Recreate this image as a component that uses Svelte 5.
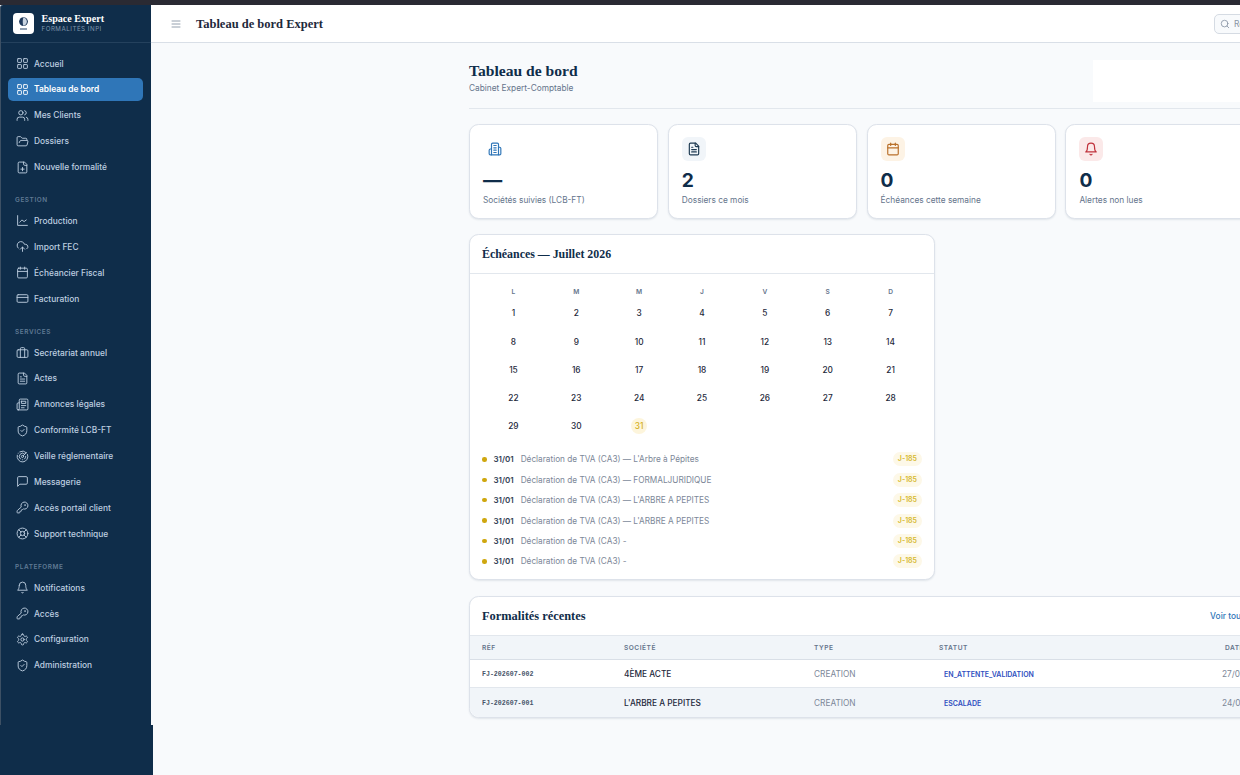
<script>
  const I = {
    grid: '<rect x="3" y="3" width="7" height="7" rx="1"/><rect x="14" y="3" width="7" height="7" rx="1"/><rect x="14" y="14" width="7" height="7" rx="1"/><rect x="3" y="14" width="7" height="7" rx="1"/>',
    users: '<path d="M16 21v-2a4 4 0 0 0-4-4H6a4 4 0 0 0-4 4v2"/><circle cx="9" cy="7" r="4"/><path d="M22 21v-2a4 4 0 0 0-3-3.87"/><path d="M16 3.13a4 4 0 0 1 0 7.75"/>',
    folder: '<path d="m6 14 1.5-2.9A2 2 0 0 1 9.24 10H20a2 2 0 0 1 1.94 2.5l-1.54 6a2 2 0 0 1-1.95 1.5H4a2 2 0 0 1-2-2V5a2 2 0 0 1 2-2h3.9a2 2 0 0 1 1.69.9l.81 1.2a2 2 0 0 0 1.67.9H18a2 2 0 0 1 2 2v2"/>',
    fileplus: '<path d="M15 2H6a2 2 0 0 0-2 2v16a2 2 0 0 0 2 2h12a2 2 0 0 0 2-2V7Z"/><path d="M14 2v4a2 2 0 0 0 2 2h4"/><path d="M9 15h6"/><path d="M12 18v-6"/>',
    chart: '<path d="M3 3v18h18"/><path d="m19 11-4 3-4-3-4 4"/>',
    upload: '<path d="M12 13v8"/><path d="M4 14.899A7 7 0 1 1 15.71 8h1.79a4.5 4.5 0 0 1 2.5 8.242"/><path d="m8 17 4-4 4 4"/>',
    calendar: '<path d="M8 2v4"/><path d="M16 2v4"/><rect x="3" y="4" width="18" height="18" rx="2"/><path d="M3 10h18"/>',
    card: '<rect x="2" y="5" width="20" height="14" rx="2"/><path d="M2 10h20"/>',
    briefcase: '<rect x="2" y="7" width="20" height="14" rx="2"/><path d="M16 21V5a2 2 0 0 0-2-2h-4a2 2 0 0 0-2 2v16"/>',
    file: '<path d="M15 2H6a2 2 0 0 0-2 2v16a2 2 0 0 0 2 2h12a2 2 0 0 0 2-2V7Z"/><path d="M14 2v4a2 2 0 0 0 2 2h4"/><path d="M10 9H8"/><path d="M16 13H8"/><path d="M16 17H8"/>',
    news: '<path d="M4 22h16a2 2 0 0 0 2-2V4a2 2 0 0 0-2-2H8a2 2 0 0 0-2 2v16a2 2 0 0 1-2 2Zm0 0a2 2 0 0 1-2-2v-9c0-1.1.9-2 2-2h2"/><path d="M18 14h-8"/><path d="M15 18h-5"/><path d="M10 6h8v4h-8V6Z"/>',
    shield: '<path d="M20 13c0 5-3.5 7.5-7.66 8.95a1 1 0 0 1-.67-.01C7.5 20.5 4 18 4 13V6a1 1 0 0 1 1-1c2 0 4.5-1.2 6.24-2.72a1.17 1.17 0 0 1 1.52 0C14.51 3.81 17 5 19 5a1 1 0 0 1 1 1z"/><path d="m9 12 2 2 4-4"/>',
    radar: '<path d="M19.07 4.93A10 10 0 0 0 6.99 3.34"/><path d="M4 6h.01"/><path d="M2.29 9.62A10 10 0 1 0 21.31 8.35"/><path d="M16.24 7.76A6 6 0 1 0 8.23 16.67"/><path d="M12 18h.01"/><path d="M17.99 11.66A6 6 0 0 1 15.77 16.67"/><circle cx="12" cy="12" r="2"/><path d="m13.41 10.59 5.66-5.66"/>',
    message: '<path d="M21 15a2 2 0 0 1-2 2H7l-4 4V5a2 2 0 0 1 2-2h14a2 2 0 0 1 2 2z"/>',
    key: '<path d="M2.586 17.414A2 2 0 0 0 2 18.828V21a1 1 0 0 0 1 1h3a1 1 0 0 0 1-1v-1a1 1 0 0 1 1-1h1a1 1 0 0 0 1-1v-1a1 1 0 0 1 1-1h.172a2 2 0 0 0 1.414-.586l.814-.814a6.5 6.5 0 1 0-4-4z"/><circle cx="16.5" cy="7.5" r=".5"/>',
    buoy: '<circle cx="12" cy="12" r="10"/><path d="m4.93 4.93 4.24 4.24"/><path d="m14.83 9.17 4.24-4.24"/><path d="m14.83 14.83 4.24 4.24"/><path d="m9.17 14.83-4.24 4.24"/><circle cx="12" cy="12" r="4"/>',
    bell: '<path d="M6 8a6 6 0 0 1 12 0c0 7 3 9 3 9H3s3-2 3-9"/><path d="M10.3 21a1.94 1.94 0 0 0 3.4 0"/>',
    gear: '<path d="M12.22 2h-.44a2 2 0 0 0-2 2v.18a2 2 0 0 1-1 1.73l-.43.25a2 2 0 0 1-2 0l-.15-.08a2 2 0 0 0-2.73.73l-.22.38a2 2 0 0 0 .73 2.73l.15.1a2 2 0 0 1 1 1.72v.51a2 2 0 0 1-1 1.74l-.15.09a2 2 0 0 0-.73 2.73l.22.38a2 2 0 0 0 2.73.73l.15-.08a2 2 0 0 1 2 0l.43.25a2 2 0 0 1 1 1.73V20a2 2 0 0 0 2 2h.44a2 2 0 0 0 2-2v-.18a2 2 0 0 1 1-1.73l.43-.25a2 2 0 0 1 2 0l.15.08a2 2 0 0 0 2.73-.73l.22-.39a2 2 0 0 0-.73-2.73l-.15-.08a2 2 0 0 1-1-1.74v-.5a2 2 0 0 1 1-1.74l.15-.09a2 2 0 0 0 .73-2.73l-.22-.38a2 2 0 0 0-2.73-.73l-.15.08a2 2 0 0 1-2 0l-.43-.25a2 2 0 0 1-1-1.73V4a2 2 0 0 0-2-2z"/><circle cx="12" cy="12" r="3"/>',
    menu: '<path d="M4 6h16"/><path d="M4 12h16"/><path d="M4 18h16"/>',
    search: '<circle cx="11" cy="11" r="8"/><path d="m21 21-4.3-4.3"/>',
    building: '<path d="M6 22V4a2 2 0 0 1 2-2h8a2 2 0 0 1 2 2v18Z"/><path d="M6 12H4a2 2 0 0 0-2 2v6a2 2 0 0 0 2 2h2"/><path d="M18 9h2a2 2 0 0 1 2 2v9a2 2 0 0 1-2 2h-2"/><path d="M10 6h4"/><path d="M10 10h4"/><path d="M10 14h4"/><path d="M10 18h4"/>'
  };

  const nav = [
    { items: [['Accueil', 'grid'], ['Tableau de bord', 'grid', true], ['Mes Clients', 'users'], ['Dossiers', 'folder'], ['Nouvelle formalité', 'fileplus']] },
    { label: 'Gestion', items: [['Production', 'chart'], ['Import FEC', 'upload'], ['Échéancier Fiscal', 'calendar'], ['Facturation', 'card']] },
    { label: 'Services', items: [['Secrétariat annuel', 'briefcase'], ['Actes', 'file'], ['Annonces légales', 'news'], ['Conformité LCB-FT', 'shield'], ['Veille réglementaire', 'radar'], ['Messagerie', 'message'], ['Accès portail client', 'key'], ['Support technique', 'buoy']] },
    { label: 'Plateforme', items: [['Notifications', 'bell'], ['Accès', 'key'], ['Configuration', 'gear'], ['Administration', 'shield']] }
  ];

  const stats = [
    { icon: 'building', tone: 'blue', value: '—', label: 'Sociétés suivies (LCB-FT)' },
    { icon: 'file', tone: 'slate', value: '2', label: 'Dossiers ce mois' },
    { icon: 'calendar', tone: 'amber', value: '0', label: 'Échéances cette semaine' },
    { icon: 'bell', tone: 'red', value: '0', label: 'Alertes non lues' }
  ];

  const weekdays = ['L', 'M', 'M', 'J', 'V', 'S', 'D'];
  const days = Array.from({ length: 31 }, (_, i) => i + 1);

  const deadlines = [
    'Déclaration de TVA (CA3) — L\'Arbre à Pépites',
    'Déclaration de TVA (CA3) — FORMALJURIDIQUE',
    'Déclaration de TVA (CA3) — L\'ARBRE A PEPITES',
    'Déclaration de TVA (CA3) — L\'ARBRE A PEPITES',
    'Déclaration de TVA (CA3) -',
    'Déclaration de TVA (CA3) -'
  ];

  const rows = [
    { ref: 'FJ-202607-002', company: '4ÈME ACTE', type: 'CREATION', status: 'EN_ATTENTE_VALIDATION', date: '27/07/2026' },
    { ref: 'FJ-202607-001', company: "L'ARBRE A PEPITES", type: 'CREATION', status: 'ESCALADE', date: '24/07/2026' }
  ];
</script>

{#snippet icon(name)}
  <svg class="ic" viewBox="0 0 24 24" fill="none" stroke="currentColor" stroke-width="2" stroke-linecap="round" stroke-linejoin="round">{@html I[name]}</svg>
{/snippet}

<div class="strip"></div>
<div class="shell">
  <aside>
    <div class="side">
      <div class="brand">
        <div class="logo">
          <svg viewBox="0 0 21 21">
            <circle cx="10.5" cy="8.6" r="4.4" fill="#1f3a5c" />
            <path d="M10.5 4.4c-1 1.2-1 7.2 0 8.4 2.1-.3 3.4-2 3.4-4.2s-1.3-3.9-3.4-4.2z" fill="#c9d4e0" />
            <rect x="7" y="15.4" width="7" height="1.2" fill="#47607e" />
          </svg>
        </div>
        <div>
          <div class="brand-name">Espace Expert</div>
          <div class="brand-sub">FORMALITÉS INPI</div>
        </div>
      </div>
      <nav>
        {#each nav as group}
          <div class="group">
            {#if group.label}<div class="group-label">{group.label}</div>{/if}
            {#each group.items as [text, ic, active]}
              <div class="item" class:active>{@render icon(ic)}<span>{text}</span></div>
            {/each}
          </div>
        {/each}
      </nav>
    </div>
    <div class="side-foot"></div>
  </aside>

  <main>
    <header class="topbar">
      <span class="burger">{@render icon('menu')}</span>
      <span class="top-title">Tableau de bord Expert</span>
      <div class="search">{@render icon('search')}<span>Rechercher…</span></div>
    </header>

    <div class="content">
      <div class="page-head">
        <div>
          <h1>Tableau de bord</h1>
          <p>Cabinet Expert-Comptable</p>
        </div>
        <div class="head-box"></div>
      </div>

      <div class="stats">
        {#each stats as s}
          <div class="card stat">
            <div class="stat-ic {s.tone}">{@render icon(s.icon)}</div>
            <div class="stat-val">{s.value}</div>
            <div class="stat-label">{s.label}</div>
          </div>
        {/each}
      </div>

      <div class="two">
        <div class="card cal">
          <div class="card-head"><h2>Échéances — Juillet 2026</h2></div>
          <div class="cal-body">
            <div class="cal-grid">
              {#each weekdays as d}<div class="wd">{d}</div>{/each}
              {#each days as d}
                <div class="day"><span class:today={d === 31}>{d}</span></div>
              {/each}
            </div>
            <ul>
              {#each deadlines as text}
                <li>
                  <i></i><strong>31/01</strong><span class="dl-text">{text}</span><span class="pill">J-185</span>
                </li>
              {/each}
            </ul>
          </div>
        </div>
      </div>

      <div class="card recent">
        <div class="card-head"><h2>Formalités récentes</h2><span class="all">Voir tous</span></div>
        <div class="tr th">
          <div>Réf</div><div>Société</div><div>Type</div><div>Statut</div><div class="date-h">Date</div>
        </div>
        {#each rows as r, i}
          <div class="tr body" class:alt={i === 1}>
            <div class="ref">{r.ref}</div>
            <div class="co">{r.company}</div>
            <div class="muted">{r.type}</div>
            <div class="status">{r.status}</div>
            <div class="muted">{r.date}</div>
          </div>
        {/each}
      </div>
    </div>
  </main>
</div>

<style>
  :global(body) {
    background: #f8fafc;
    overflow: hidden;
  }
  .strip {
    height: 5px;
    background: #2a2a33;
  }
  .shell {
    display: flex;
    width: 1572.6px;
    height: 770px;
    font-family: Inter, 'Liberation Sans', sans-serif;
    color: #1e293b;
  }
  aside {
    width: 153px;
    flex-shrink: 0;
    display: flex;
    flex-direction: column;
    margin-right: -2px;
  }
  .side {
    width: 151px;
    height: 720px;
    background: #0f2d4a;
    border-left: 1px solid #3d5064;
    box-sizing: border-box;
    border-top-left-radius: 3px;
  }
  .side-foot {
    flex: 1;
    background: #0f2d4a;
  }
  .brand {
    height: 37.5px;
    box-sizing: border-box;
    display: flex;
    align-items: center;
    gap: 8px;
    padding: 0 0 0 11.5px;
    border-bottom: 1px solid #24415d;
  }
  .logo {
    width: 21px;
    height: 21px;
    border-radius: 4px;
    background: #fff;
    flex-shrink: 0;
  }
  .logo svg {
    display: block;
  }
  .brand-name {
    font-family: 'Liberation Serif', serif;
    font-weight: 700;
    font-size: 10.1px;
    line-height: 12px;
    color: #fff;
  }
  .brand-sub {
    font-size: 6.2px;
    line-height: 8px;
    letter-spacing: 0.5px;
    color: #7f97ad;
  }
  nav {
    padding: 9.5px 8px 0 6.5px;
  }
  .group-label {
    font-size: 6.4px;
    font-weight: 600;
    line-height: 8px;
    letter-spacing: 0.6px;
    text-transform: uppercase;
    color: #5f7a94;
    padding: 0 0 0 7.5px;
    margin: 0 0 5.4px;
  }
  .group {
    margin-bottom: 17.5px;
  }
  .item {
    display: flex;
    align-items: center;
    gap: 5.5px;
    height: 23px;
    margin-bottom: 2.9px;
    padding-left: 8px;
    border-radius: 5px;
    font-size: 8.4px;
    font-weight: 500;
    color: #bfcfe0;
  }
  .item :global(.ic) {
    width: 13px;
    height: 13px;
    stroke-width: 1.7;
  }
  .item.active {
    background: #2f76b8;
    color: #fff;
    font-weight: 600;
  }
  .ic {
    flex-shrink: 0;
    display: block;
  }
  main {
    flex: 1;
    min-width: 0;
  }
  .topbar {
    height: 38px;
    box-sizing: border-box;
    background: #fff;
    border-bottom: 1px solid #d9dfe7;
    display: flex;
    align-items: center;
    padding-left: 19px;
  }
  .burger {
    color: #94a0ae;
    margin-right: 14px;
  }
  .burger :global(.ic) {
    width: 12px;
    height: 12px;
  }
  .top-title {
    font-family: 'Liberation Serif', serif;
    font-weight: 700;
    font-size: 12.5px;
    padding-top: 1.5px;
    color: #1e293b;
  }
  .search {
    margin-left: auto;
    margin-right: 158.5px;
    width: 200px;
    height: 20px;
    box-sizing: border-box;
    display: flex;
    align-items: center;
    gap: 4px;
    padding-left: 5px;
    border: 1px solid #d5dbe3;
    border-radius: 5px;
    background: #f8fafc;
    font-size: 8.3px;
    color: #8793a3;
  }
  .search :global(.ic) {
    width: 10px;
    height: 10px;
  }
  .content {
    width: 785.6px;
    margin: 0 auto;
    padding-top: 17px;
  }
  .page-head {
    display: flex;
    justify-content: space-between;
    padding-bottom: 6px;
    border-bottom: 1.5px solid #e2e7ed;
    margin-bottom: 15px;
  }
  h1 {
    margin: 2px 0 0;
    font-family: 'Liberation Serif', serif;
    font-weight: 700;
    font-size: 15.6px;
    line-height: 18px;
    color: #0f2d4a;
  }
  .page-head p {
    margin: 1.5px 0 0;
    font-size: 8.3px;
    line-height: 12px;
    color: #64748b;
  }
  .head-box {
    width: 162px;
    height: 42px;
    background: #fff;
  }
  .stats {
    display: grid;
    grid-template-columns: repeat(4, 1fr);
    gap: 9.6px;
    margin-bottom: 14.5px;
  }
  .card {
    background: #fff;
    border: 1px solid #dde2ea;
    border-radius: 9.6px;
    box-shadow: 0 1px 2px rgba(15, 45, 74, 0.1);
    box-sizing: border-box;
  }
  .stat {
    height: 95px;
    padding: 12px 13px;
  }
  .stat-ic {
    width: 24px;
    height: 24px;
    border-radius: 6px;
    display: flex;
    align-items: center;
    justify-content: center;
  }
  .stat-ic :global(.ic) {
    width: 14px;
    height: 14px;
  }
  .blue { color: #2f76b8; background: #fff; }
  .slate { color: #1e3a52; background: #f1f5f9; }
  .amber { color: #b9702a; background: #fdf3e5; }
  .red { color: #c0323c; background: #fbe9e9; }
  .stat-val {
    margin-top: 7.5px;
    font-size: 19.2px;
    font-weight: 700;
    line-height: 23px;
    color: #0f2d4a;
  }
  .stat-label {
    margin-top: 2.5px;
    font-size: 8.3px;
    line-height: 12px;
    color: #64748b;
  }
  .two {
    display: grid;
    grid-template-columns: 466px 1fr;
    margin-bottom: 15.5px;
  }
  .card-head {
    display: flex;
    align-items: center;
    justify-content: space-between;
    height: 39.5px;
    padding: 0 8px 0 12px;
    border-bottom: 1px solid #e2e7ed;
    box-sizing: border-box;
  }
  h2 {
    margin: 0;
    padding-top: 1.5px;
    font-family: 'Liberation Serif', serif;
    font-weight: 700;
    font-size: 12.4px;
    color: #0f2d4a;
  }
  .cal h2 {
    font-size: 11.9px;
  }
  .all {
    font-size: 8.4px;
    font-weight: 500;
    color: #2f76b8;
  }
  .cal {
    height: 346.5px;
  }
  .cal-body {
    padding: 11px 12px 0;
  }
  .cal-grid {
    display: grid;
    grid-template-columns: repeat(7, 1fr);
    grid-template-rows: 14.4px;
    grid-auto-rows: 28.2px;
    font-size: 8.3px;
    font-weight: 500;
    text-align: center;
  }
  .wd {
    font-size: 6.6px;
    font-weight: 600;
    color: #64748b;
    line-height: 14.4px;
  }
  .day {
    display: flex;
    align-items: center;
    justify-content: center;
  }
  .day span {
    width: 16px;
    height: 16px;
    line-height: 16px;
    border-radius: 50%;
  }
  .day .today {
    background: #fdf5dc;
    color: #d4b020;
  }
  ul {
    list-style: none;
    margin: 8.9px 0 0;
    padding: 0;
  }
  li {
    display: flex;
    align-items: center;
    height: 20.4px;
    font-size: 8.24px;
  }
  li i {
    width: 4.5px;
    height: 4.5px;
    border-radius: 50%;
    background: #cfa70f;
    margin-right: 7px;
  }
  li strong {
    font-size: 8px;
    font-weight: 600;
    margin-right: 7px;
    color: #334155;
  }
  .dl-text {
    color: #7c8798;
  }
  .pill {
    margin-left: auto;
    padding: 2px 5px;
    border-radius: 7px;
    background: #fdf8e8;
    color: #d6b92e;
    font-size: 7px;
    font-weight: 600;
    line-height: 10px;
  }
  .tr {
    display: grid;
    grid-template-columns: 142px 190px 125px 283px 1fr;
    align-items: center;
    height: 28.4px;
    padding-left: 12px;
    border-bottom: 1px solid #e2e7ed;
    box-sizing: border-box;
    font-size: 8.3px;
  }
  .tr.body {
    padding-top: 1.5px;
  }
  .tr:last-child {
    border-bottom: 0;
  }
  .th {
    height: 24px;
    background: #f1f5f9;
    border-bottom: 1px solid #d9dfe7;
    font-size: 6.6px;
    font-weight: 600;
    letter-spacing: 0.5px;
    text-transform: uppercase;
    color: #64748b;
  }
  .date-h {
    padding-left: 3px;
  }
  .alt {
    background: #f1f5f9;
    border-radius: 0 0 9px 9px;
  }
  .ref {
    font-family: 'Liberation Mono', monospace;
    font-size: 6.6px;
    font-weight: 700;
    color: #475569;
  }
  .co {
    font-weight: 500;
    color: #1e293b;
  }
  .muted {
    color: #7c8798;
  }
  .status {
    padding-left: 5px;
    font-size: 7px;
    font-weight: 600;
    color: #2f4fc0;
  }
</style>
